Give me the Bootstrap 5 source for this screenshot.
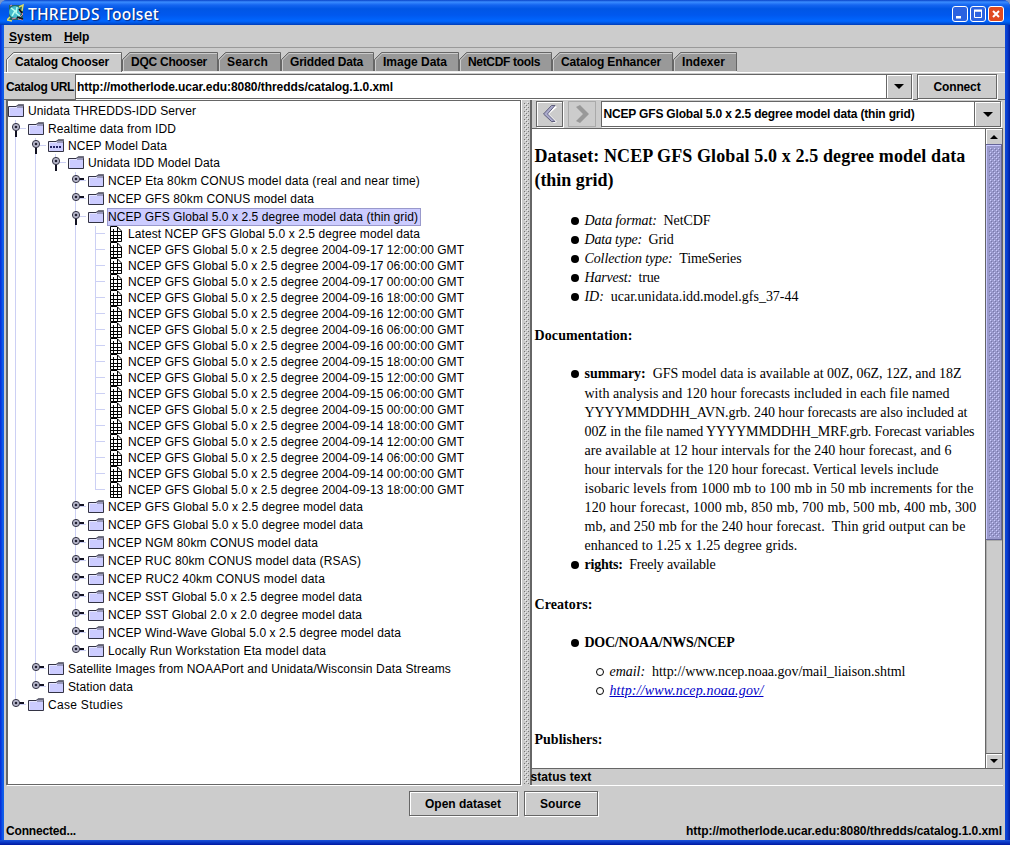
<!DOCTYPE html>
<html lang="en">
<head>
<meta charset="utf-8">
<meta name="viewport" content="width=device-width, initial-scale=1">
<title>THREDDS Toolset</title>
<link href="https://cdn.jsdelivr.net/npm/bootstrap@5.3.0/dist/css/bootstrap.min.css" rel="stylesheet">
<style>
:root{--face:#ccc;--edge:#666}
body{width:1010px;height:845px;overflow:hidden;background:#7b96c8;color:#000;font:12px/16px "Liberation Sans",Arial,sans-serif;white-space:nowrap}
.win{width:1010px;height:845px;padding:0 5px 5px 4px;background:linear-gradient(90deg,#0831d9 0,#0831d9 1px,#0b55e8 2px,#1260ea 4px,#0b46d8 1005px,#0a3fd0 1007px,#001ea0 1010px);border-radius:7px 7px 0 0;position:relative}
.foot-edge{left:0;right:0;bottom:0;height:5px;background:linear-gradient(#1c52d8,#0c3cc8 40%,#0018a0)}
.titlebar{height:25px;margin:0 -5px 0 -4px;padding:3px 6px 0 7px;border-radius:7px 7px 0 0;background:linear-gradient(#0842c8 0,#3a8cff 8%,#1565f0 20%,#0056e5 35%,#0058ee 60%,#0066ff 84%,#0055e0 92%,#003cb8 100%)}
.titlebar b{font:500 15.5px/22px "Noto Sans","Open Sans",sans-serif;color:#fff;text-shadow:1px 1px 1px #0a2a80;margin-left:3px}
.wbtns{gap:2px;padding-top:3px}
.wbtn{width:16px;height:16px}
.face{height:815px;background:var(--face);font-weight:700}
.menubar{height:23px;padding:4px 0 0 5px;gap:12px;border-bottom:1px solid #999;line-height:17px}
.tabs{height:24px;padding:4px 0 0 2px}
.tab-x{height:20px;position:relative;flex:none;padding:3px 0 0 9px;line-height:15px}
.tab-x svg{position:absolute;left:0;top:0}
.tab-x span{position:relative}
.urlrow{height:27px;padding:1px 8px 0 2px;border-top:1px solid #fff}
.boxy{border:1px solid var(--edge);box-shadow:1px 1px 0 #fff,inset 1px 1px 0 #fff;background:var(--face)}
.combo{border:1px solid var(--edge);box-shadow:1px 1px 0 #fff;background:#fff}
.combo .arr{width:25px;border-left:1px solid var(--edge);background:var(--face);box-shadow:inset 1px 1px 0 #fff}
.split{height:687px;padding:0 2px 0 2px;border-top:1px solid var(--edge)}
.leftp{width:516px;height:685px;background:#fff;border:2px solid #666;border-top-width:1px;border-right-width:1px;border-bottom-width:1px;box-shadow:1px 1px 0 #fff;font-weight:400;padding-top:1px}
.trow .sel{background:#ccf;outline:1px solid #99c;padding-right:2px}
.grip{width:9px;height:686px}
.rightp{width:473px;height:686px;border-left:2px solid #666}
.tool{height:28px;padding:1px 1px 0 4px;gap:5px}
.doc{height:641px;border:1px solid #666;border-left:0;background:#fff}
.page{width:452px;padding:15px 0 0 2px;font:14px/19.1px "Liberation Serif","Times New Roman",serif}
.page h1{font:700 18px/24px "Liberation Serif",serif;margin:0 0 19px}
.page ul{list-style:none;margin:0;padding:0 0 0 50px}
.page ul ul{padding-left:25px;margin-top:10px}
.page li{position:relative}
.page li::before{content:"";position:absolute;left:-13px;top:6px;width:8px;height:8px;border-radius:50%;background:#000}
.page ul ul li::before{background:#fff;border:1px solid #000}
.page h2{font:700 14px/19px "Liberation Serif",serif;margin:20px 0 19px}
.page h2.last-h{margin-top:30px}
.page a{color:#0000c8;text-decoration:underline}
.sbar{width:17px;border-left:1px solid #666}
.sbtn{height:15px;background:var(--face);box-shadow:inset 1px 1px 0 #fff}
.status{height:17px;border-bottom:1px solid #fff;margin-left:-2px;line-height:17px}
.fit{display:inline-block;white-space:pre}
</style>
</head>
<body>
<div class="win">
<header class="titlebar d-flex">
<svg width="18" height="20" viewBox="0 0 18 20"><rect x="2" y="2" width="14" height="15" fill="#266"/><circle cx="8" cy="9" r="6" fill="#4bc"/><path d="M4 5l4 3-3 5M10 4l-1 6 4 3" stroke="#b8fff0" fill="none" stroke-width="1.5"/><path d="M12 4l4-2-1 6M3 14l-3 3 5 1" stroke="#dd6" fill="none" stroke-width="1.5"/><path d="M12 8l4 3-5 5 5 1M3 3l2-1M5 16l4-1" stroke="#d8a" fill="none"/><path d="M10 14l6 2M12 6l3 4" stroke="#111" stroke-width="1.6"/></svg>
<b class="fit" data-w="131">THREDDS Toolset</b>
<div class="wbtns ms-auto d-flex">
<svg class="wbtn" viewBox="0 0 16 16"><rect x=".5" y=".5" width="15" height="15" rx="2.5" fill="#2b62e0" stroke="#fff"/><rect x="4" y="10" width="5" height="2.5" fill="#fff"/></svg>
<svg class="wbtn" viewBox="0 0 16 16"><rect x=".5" y=".5" width="15" height="15" rx="2.5" fill="#2b62e0" stroke="#fff"/><path d="M4.5 5h7v6.500h-7z" fill="none" stroke="#fff"/><path d="M4 4.500h8" stroke="#fff" stroke-width="2"/></svg>
<svg class="wbtn" viewBox="0 0 16 16"><rect x=".5" y=".5" width="15" height="15" rx="2.5" fill="#e04a20" stroke="#fff"/><path d="M5 5l6 6m0-6l-6 6" stroke="#fff" stroke-width="2"/></svg>
</div>
</header>
<main class="face">
<nav class="menubar d-flex"><span class="fit" data-w="43"><u>S</u>ystem</span><span class="fit" data-w="25"><u>H</u>elp</span></nav>
<div class="tabs d-flex" id="tabs"></div>
<div class="urlrow d-flex">
<div style="width:69px;padding-top:5px"><span class="fit" data-w="68">Catalog URL</span></div>
<div class="combo d-flex justify-content-between" style="width:837px;height:25px"><span class="fit" data-w="316" style="padding:4px 0 0 1px">http://motherlode.ucar.edu:8080/thredds/catalog.1.0.xml</span><div class="arr d-flex align-items-center justify-content-center"><svg width="10" height="5"><path d="M0 0h10L5 5z"/></svg></div></div>
<div class="boxy text-center" style="width:80px;height:25px;margin-left:5px;padding-top:4px"><span class="fit" data-w="47">Connect</span></div>
</div>
<div class="split d-flex">
<section class="leftp" id="tree"></section>
<svg class="grip" width="9" height="686"><defs><pattern id="bump" width="4" height="4" patternUnits="userSpaceOnUse"><path d="M0 0h1v1H0zM2 2h1v1H2z" fill="#eee"/><path d="M1 1h1v1H1zM3 3h1v1H3z" fill="#777"/></pattern></defs><rect width="9" height="686" fill="#ccc"/><rect width="1" height="686" fill="#fff"/><rect x="3" y="2" width="5" height="682" fill="url(#bump)"/></svg>
<section class="rightp">
<div class="tool d-flex">
<div class="boxy" style="width:27px;height:26px"><svg width="25" height="24"><path d="M16 3l4 2-8 7 8 8-3 1-10-9z" fill="#fff"/><path d="M14.500 3.500h3.500l-7.500 8.500 7.500 7.500h-3.500l-8-7.500z" fill="#aaaacb" stroke="#446" stroke-width=".8"/></svg></div>
<div style="width:28px;height:26px;border:1px solid #aaa"><svg width="26" height="24"><path d="M7 5l4-2 9 9-9 9-4-2 7-7z" fill="#999"/></svg></div>
<div class="combo d-flex justify-content-between" style="width:400px;height:26px"><span class="fit" data-w="311" style="padding:4px 0 0 1px">NCEP GFS Global 5.0 x 2.5 degree model data (thin grid)</span><div class="arr d-flex align-items-center justify-content-center" style="width:26px"><svg width="10" height="5"><path d="M0 0h10L5 5z"/></svg></div></div>
</div>
<div class="doc d-flex">
<article class="page">
<h1><span class="fit" data-w="431">Dataset: NCEP GFS Global 5.0 x 2.5 degree model data</span><br><span class="fit" data-w="79">(thin grid)</span></h1>
<ul><li><span class="fit" data-w="126"><i>Data format:</i>  NetCDF</span></li><li><span class="fit" data-w="89"><i>Data type:</i>  Grid</span></li><li><span class="fit" data-w="157"><i>Collection type:</i>  TimeSeries</span></li><li><span class="fit" data-w="75"><i>Harvest:</i>  true</span></li><li><span class="fit" data-w="214"><i>ID:</i>  ucar.unidata.idd.model.gfs_37-44</span></li></ul>
<h2><span class="fit" data-w="98">Documentation:</span></h2>
<ul><li><span class="fit" data-w="377"><b>summary:</b>  GFS model data is available at 00Z, 06Z, 12Z, and 18Z</span><br><span class="fit" data-w="365">with analysis and 120 hour forecasts included in each file named</span><br><span class="fit" data-w="383">YYYYMMDDHH_AVN.grb. 240 hour forecasts are also included at</span><br><span class="fit" data-w="390">00Z in the file named YYYYMMDDHH_MRF.grb. Forecast variables</span><br><span class="fit" data-w="367">are available at 12 hour intervals for the 240 hour forecast, and 6</span><br><span class="fit" data-w="354">hour intervals for the 120 hour forecast. Vertical levels include</span><br><span class="fit" data-w="389">isobaric levels from 1000 mb to 100 mb in 50 mb increments for the</span><br><span class="fit" data-w="392">120 hour forecast, 1000 mb, 850 mb, 700 mb, 500 mb, 400 mb, 300</span><br><span class="fit" data-w="381">mb, and 250 mb for the 240 hour forecast.  Thin grid output can be</span><br><span class="fit" data-w="213">enhanced to 1.25 x 1.25 degree grids.</span></li><li><span class="fit" data-w="131"><b>rights:</b>  Freely available</span></li></ul>
<h2><span class="fit" data-w="58">Creators:</span></h2>
<ul><li><b class="fit" data-w="150">DOC/NOAA/NWS/NCEP</b><ul><li><span class="fit" data-w="296"><i>email:</i>  http://www.ncep.noaa.gov/mail_liaison.shtml</span></li><li><a href="#" class="fit" data-w="154"><i>http://www.ncep.noaa.gov/</i></a></li></ul></li></ul>
<h2 class="last-h"><span class="fit" data-w="68">Publishers:</span></h2>
</article>
<div class="sbar ms-auto d-flex flex-column"><div class="sbtn d-flex align-items-center justify-content-center"><svg width="8" height="4"><path d="M0 4h8L4 0z"/></svg></div>
<svg width="16" height="396"><defs><pattern id="bump2" width="4" height="4" patternUnits="userSpaceOnUse"><path d="M0 0h1v1H0zM2 2h1v1H2z" fill="#ccf"/><path d="M1 1h1v1H1zM3 3h1v1H3z" fill="#77a"/></pattern></defs><rect width="16" height="396" fill="#669"/><rect y="1" width="15" height="394" fill="#ccf"/><rect x="1" y="2" width="14" height="393" fill="#99c"/><rect x="3" y="4" width="11" height="389" fill="url(#bump2)"/></svg>
<div class="flex-grow-1" style="background:#ccc;box-shadow:inset 1px 1px 0 #aaa"></div><div class="sbtn d-flex align-items-center justify-content-center" style="border-top:1px solid #666"><svg width="8" height="4"><path d="M0 0h8L4 4z"/></svg></div></div>
</div>
<div class="status"><span class="fit" data-w="61">status text</span></div>
</section>
</div>
<div class="d-flex justify-content-center" style="height:37px;padding:5px 3px 0 0;gap:6px"><div class="boxy text-center" style="width:109px;height:25px;padding-top:4px"><span class="fit" data-w="76">Open dataset</span></div><div class="boxy text-center" style="width:74px;height:25px;padding-top:4px"><span class="fit" data-w="41">Source</span></div></div>
<div class="d-flex justify-content-between" style="padding:0 3px 0 2px"><span class="fit" data-w="70">Connected...</span><span class="fit" data-w="316">http://motherlode.ucar.edu:8080/thredds/catalog.1.0.xml</span></div>
</main>
<div class="foot-edge position-absolute"></div>
</div>
<script>
// Tabs: label, tab width, text width
const tabs=[['Catalog Chooser',116,94],['DQC Chooser',96,76],['Search',63,41],['Gridded Data',93,73],['Image Data',85,64],['NetCDF tools',93,72],['Catalog Enhancer',121,100],['Indexer',64,43]];
document.getElementById('tabs').innerHTML=tabs.map(([n,w,t],i)=>`<div class="tab-x" style="width:${w}px"><svg width="${w}" height="20"><path d="M.5 20V7.5L7.5.5H${w-.5}V20" fill="${i?'#999':'#ccc'}" stroke="#666"/><path d="M1.5 20V8L8 1.5H${w-1}" fill="none" stroke="${i?'#ccc':'#fff'}"/>${i?`<path d="M0 0h7L0 7z" fill="#ccc"/><path d="M0 19.5h${w}" stroke="#eee"/>`:''}</svg><span class="fit" data-w="${t}">${n}</span></div>`).join('');

// Tree rows: depth, kind (f folder, d dotted folder, l leaf), state (o open, c closed), label, text width
const rows=[[0,'f','','Unidata THREDDS-IDD Server',168],[1,'f','o','Realtime data from IDD',128],[2,'d','o','NCEP Model Data',99],[3,'f','o','Unidata IDD Model Data',132],[4,'f','c','NCEP Eta 80km CONUS model data (real and near time)',312],[4,'f','c','NCEP GFS 80km CONUS model data',206],[4,'f','o','NCEP GFS Global 5.0 x 2.5 degree model data (thin grid)',310],[5,'l','','Latest NCEP GFS Global 5.0 x 2.5 degree model data',292]];
const days=[17,16,15,14,13],hours=['18','12','06','00'];
for(const d of days)for(const h of hours){if((d==17&&h=='18')||(d==13&&h!='18'))continue;rows.push([5,'l','',`NCEP GFS Global 5.0 x 2.5 degree 2004-09-${d} ${h}:00:00 GMT`,336])}
rows.push([4,'f','c','NCEP GFS Global 5.0 x 2.5 degree model data',255],[4,'f','c','NCEP GFS Global 5.0 x 5.0 degree model data',255],[4,'f','c','NCEP NGM 80km CONUS model data',210],[4,'f','c','NCEP RUC 80km CONUS model data (RSAS)',253],[4,'f','c','NCEP RUC2 40km CONUS model data',217],[4,'f','c','NCEP SST Global 5.0 x 2.5 degree model data',254],[4,'f','c','NCEP SST Global 2.0 x 2.0 degree model data',254],[4,'f','c','NCEP Wind-Wave Global 5.0 x 2.5 degree model data',293],[4,'f','c','Locally Run Workstation Eta model data',218],[2,'f','c','Satellite Images from NOAAPort and Unidata/Wisconsin Data Streams',383],[2,'f','c','Station data',65],[1,'f','c','Case Studies',75]);
function more(i,k){for(let j=i+1;j<rows.length;j++){if(rows[j][0]==k)return true;if(rows[j][0]<k)return false}return false}
document.getElementById('tree').innerHTML=rows.map(([d,k,s,t,w],i)=>{
 const h=k=='f'?18:16,W=20*d+20,x=20*d,c=k=='f'?9:8;let g='';
 for(let n=1;n<=d;n++){const m=more(i,n),X=20*n-12.5;if(n<d?m:true)g+=`<path d="M${X} 0V${n==d&&!m?c:h}" stroke="#ccd0f4"/>`}
 if(d)g+=`<path d="M${x-12} ${c-.5}h${k=='l'?9:10}" stroke="#ccd0f4"/>`;
 if(s){const y=k=='f'?7:6;g+=s=='o'?`<path d="M${x-12} ${y+3}v7" stroke="#112" stroke-width="2"/>`:`<path d="M${x-9} ${y}h5" stroke="#112" stroke-width="2"/>`;g+=`<circle cx="${x-12}" cy="${y}" r="3.6" fill="#b8b8cc" stroke="#334"/><circle cx="${x-12}" cy="${y}" r="1.3" fill="#223"/>`}
 if(k=='l')g+=`<g transform="translate(${x+1} 0)"><path d="M1.5.5H8L12.5 5V15.5H1.5z" fill="#fff" stroke="#000"/><path d="M4.5 3V16M8.5 1V16M1 5.5H12M1 9.5H13M1 12.5H13" stroke="#000"/></g>`;
 else{const y=k=='f'?2:1;g+=`<g transform="translate(${x} ${y})"><path d="M.5 2.5H8L10 1H15.5V12.5H.5z" fill="#ccf" stroke="#334"/><path d="M9 2L10.5.3H16V2.5H9z" fill="#667"/><path d="M9 3.5h6" stroke="#99b"/><path d="M1.5 11.5V3.5H9" fill="none" stroke="#e6e6ff"/>${k=='d'?'<path d="M2 8h12" stroke="#226" stroke-width="2" stroke-dasharray="2 1"/>':''}</g>`}
 return `<div class="trow d-flex align-items-center" style="height:${h}px"><svg width="${W}" height="${h}" class="flex-shrink-0">${g}</svg><span class="${i==6?'sel':''}"><span class="fit" data-w="${w}">${t}</span></span></div>`}).join('');

// Spread each label's characters evenly over its column width
document.querySelectorAll('.fit').forEach(e=>{const cs=getComputedStyle(e),p=parseFloat(cs.paddingLeft);const r=e.getBoundingClientRect().width-p;e.style.letterSpacing=((+e.dataset.w-r)/e.textContent.length)+'px'});
</script>
<script src="https://cdn.jsdelivr.net/npm/bootstrap@5.3.0/dist/js/bootstrap.bundle.min.js"></script>
</body>
</html>
